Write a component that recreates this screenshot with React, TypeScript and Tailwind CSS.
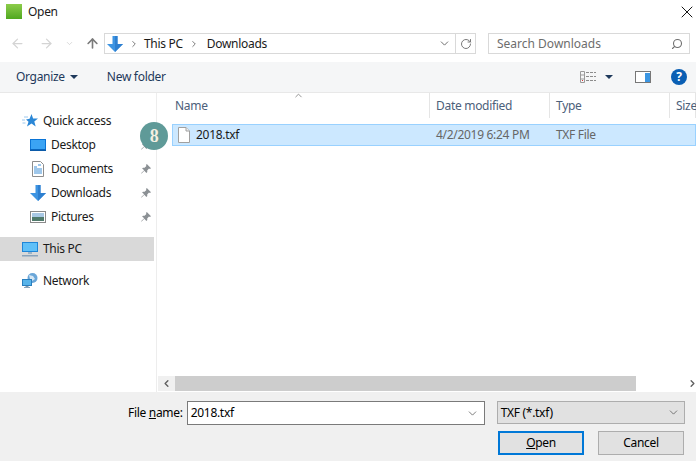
import React from "react";
import { ChevronDown, ChevronRight, ArrowLeft, ArrowRight, ArrowUp, RotateCw, Search, X } from "lucide-react";

const font = { fontFamily: '"Noto Sans", "Open Sans", sans-serif' };

function DownArrow({ size = 16 }: { size?: number }) {
  return (
    <svg width={size} height={size} viewBox="0 0 16 16" className="shrink-0">
      <path d="M5.5 0h5v8H16l-8 8-8-8h5.5z" fill="#3d94e2" />
      <path d="M8 0h2.5v8H16l-8 8z" fill="#2d7fd0" />
    </svg>
  );
}

function Star() {
  return (
    <svg width="16" height="14" viewBox="0 0 16 14">
      <path d="M9.5 0l1.6 4.4H16l-3.7 3 1.4 5-4.2-2.9L5 12.6l1.5-4.9L4 5.6l3.600-.8z" fill="#2b87d6" />
      <path d="M0 6h3M2 3h4M0.500 9h3" stroke="#9cc8ee" strokeWidth="1" />
    </svg>
  );
}

function Desktop() {
  return (
    <svg width="16" height="12" viewBox="0 0 16 12">
      <rect width="16" height="12" fill="#0a74d6" />
      <rect x="1" y="1" width="14" height="9" fill="#3ba4f4" />
      <rect x="0" y="10.500" width="16" height="1.500" fill="#0b5aa8" />
    </svg>
  );
}

function Doc() {
  return (
    <svg width="12" height="16" viewBox="0 0 12 16">
      <path d="M.5.500h8l3 3v12H.500z" fill="#fff" stroke="#8d8d8d" />
      <path d="M2 6h3M2 8h8M2 10h8M2 12h8M6 4h3" stroke="#3f8fd6" />
    </svg>
  );
}

function Picture() {
  return (
    <svg width="16" height="12" viewBox="0 0 16 12">
      <rect x=".5" y=".5" width="15" height="11" fill="#fff" stroke="#8a8a8a" />
      <rect x="2" y="2" width="12" height="4" fill="#a8c8e4" />
      <rect x="2" y="6" width="12" height="4" fill="#4f7a6b" />
    </svg>
  );
}

function Monitor() {
  return (
    <svg width="16" height="16" viewBox="0 0 16 16">
      <rect x="0" y="1" width="16" height="10" fill="#1f86d8" />
      <rect x="1" y="2" width="14" height="8" fill="#5fc0f8" />
      <rect x="6" y="11" width="4" height="2" fill="#9bb4c8" />
      <rect x="0" y="14" width="16" height="1.500" fill="#8aa4bc" />
    </svg>
  );
}

function Net() {
  return (
    <svg width="16" height="16" viewBox="0 0 16 16">
      <circle cx="10.500" cy="5" r="5" fill="#6aa6d8" />
      <path d="M7 2l4 1 2 3-3 2-2-2z" fill="#d5e6f3" />
      <rect x="0" y="6" width="10" height="7" fill="#2a7fbf" />
      <rect x="1" y="7" width="8" height="5" fill="#58b4ea" />
      <rect x="3.500" y="13" width="3" height="1" fill="#7f98ac" />
      <rect x="2" y="14" width="6" height="1" fill="#8aa4bc" />
    </svg>
  );
}

function PinIcon() {
  return (
    <svg width="10" height="10" viewBox="0 0 10 10" className="mr-[2px] shrink-0">
      <path d="M5.800 0L10 4.200 8.900 5 8 4.600 6.200 6.400 6.300 8 5.400 8.900 3.300 6.700.6 9.500 0 9.300 3.200 6.300 1.100 4.600 2 3.700 3.600 3.800 5.400 2 5 1z" fill="#8b9094" />
    </svg>
  );
}

function NavItem({ icon, label, pinned, indent }: { icon: React.ReactNode; label: string; pinned?: boolean; indent?: boolean }) {
  return (
    <div className={`flex h-6 items-center ${indent ? "pl-[30px]" : "pl-[22px]"} pr-[3px]`}>
      <span className="mr-[5px] flex h-4 w-4 items-center justify-center">{icon}</span>
      <span className="flex-1 whitespace-nowrap">{label}</span>
      {pinned && <PinIcon />}
    </div>
  );
}

function Column({ label, width, first }: { label: string; width: string; first?: boolean }) {
  return (
    <div className={`relative flex h-[25px] shrink-0 items-center border-r border-[#e5e5e5] pl-[6px] ${width}`}>
      {first && <ChevronDown size={11} className="absolute left-[124px] -top-[3px] rotate-180 text-[#8c8c8c]" />}
      <span>{label}</span>
    </div>
  );
}

export default function App() {
  return (
    <div className="flex h-[461px] w-[696px] flex-col overflow-hidden bg-white text-[12px] tracking-[-0.3px] text-[#1a1a1a]" style={font}>
      <div className="flex h-[24px] shrink-0 items-center pl-[6px] pr-[6px]">
        <span className="mr-[6px] -mt-[2px] h-[15px] w-[16px] bg-gradient-to-b from-[#8ccc4a] to-[#4fa81e]" />
        <span className="flex-1">Open</span>
        <X size={20} strokeWidth={1.1} className="-mr-[7px] text-black" />
      </div>

      <div className="flex h-[38px] shrink-0 items-center pr-[6px] pl-[10px] pt-[1px]">
        <ArrowLeft size={15} strokeWidth={2} className="mr-[14px] text-[#d4d4d4]" />
        <ArrowRight size={15} strokeWidth={2} className="mr-[11px] text-[#d4d4d4]" />
        <ChevronDown size={9} strokeWidth={2} className="mr-[11px] text-[#cfcfcf]" />
        <ArrowUp size={15} strokeWidth={2.6} className="mr-[4px] text-[#7a7a7a]" />
        <div className="flex h-[21px] w-[372px] items-center border border-[#d9d9d9]">
          <span className="ml-[2px] mr-[6px]"><DownArrow /></span>
          <ChevronRight size={10} strokeWidth={2.2} className="mr-[5px] text-[#707070]" />
          <span>This PC</span>
          <ChevronRight size={10} strokeWidth={2.2} className="ml-[6px] mr-[8px] text-[#707070]" />
          <span className="flex-1">Downloads</span>
          <ChevronDown size={13} strokeWidth={1.8} className="mr-[4px] text-[#6d6d6d]" />
          <div className="flex h-full w-[20px] items-center justify-center border-l border-[#d9d9d9]">
            <RotateCw size={12} className="text-[#7a7a7a]" />
          </div>
        </div>
        <div className="ml-[12px] flex h-[21px] flex-1 items-center justify-between border border-[#d9d9d9] pl-[8px] pr-[6px] tracking-normal text-[#6d6d6d]">
          <span>Search Downloads</span>
          <Search size={12} strokeWidth={2.2} className="-scale-x-100 text-[#6f6f6f]" />
        </div>
      </div>

      <div className="flex h-[30px] shrink-0 items-center bg-[#f5f6f7] pl-[16px] pr-[9px] text-[#1e395b]">
        <span>Organize</span>
        <span className="ml-[5px] h-0 w-0 border-x-[4px] border-t-[4px] border-x-transparent border-t-[#1e395b]" />
        <span className="ml-[29px] flex-1">New folder</span>
        <svg width="16" height="12" viewBox="0 0 16 12" className="mr-[9px]">
          <path d="M.5.500h4v11h-4zM.5 4h4M.5 8h4" fill="none" stroke="#9a9a9a" />
          <path d="M6 1.500h10M6 5.500h10M6 9.500h10" stroke="#8c8c8c" strokeDasharray="3 1" />
          <rect x="2" y="9" width="1" height="1" fill="#d33" />
        </svg>
        <span className="h-0 w-0 border-x-[4px] border-t-[4px] border-x-transparent border-t-[#1e395b]" />
        <svg width="16" height="12" viewBox="0 0 16 12" className="ml-[22px]">
          <rect x=".5" y=".5" width="15" height="11" fill="#fff" stroke="#777" />
          <rect x="10" y="2" width="5" height="9" fill="#3b96e2" />
        </svg>
        <span className="ml-[20px] flex h-4 w-4 items-center justify-center rounded-full bg-[#0a5fb4] text-[12px] font-bold text-white">?</span>
      </div>

      <div className="flex min-h-0 flex-1 border-t border-[#e8e8e8]">
        <div className="relative w-[157px] shrink-0 border-r border-[#ededed] pt-[16px] text-[#1a1a1a]">
          <NavItem icon={<Star />} label="Quick access" />
          <NavItem indent icon={<Desktop />} label="Desktop" pinned />
          <NavItem indent icon={<Doc />} label="Documents" pinned />
          <NavItem indent icon={<DownArrow />} label="Downloads" pinned />
          <NavItem indent icon={<Picture />} label="Pictures" pinned />
          <div className="mt-[8px] w-[154px] bg-[#d9d9d9]">
            <NavItem icon={<Monitor />} label="This PC" />
          </div>
          <div className="mt-[8px]">
            <NavItem icon={<Net />} label="Network" />
          </div>
          <span className="absolute left-[140px] top-[29px] flex h-[28px] w-[28px] items-center justify-center rounded-full bg-[#5f9a98] text-[18px] font-bold text-[#f2efe2]" style={{ fontFamily: '"Liberation Serif", serif' }}>8</span>
        </div>

        <div className="flex min-w-0 flex-1 flex-col pl-[12px]">
          <div className="flex shrink-0 text-[#4c607a]">
            <Column first label="Name" width="w-[261px]" />
            <Column label="Date modified" width="w-[120px]" />
            <Column label="Type" width="w-[120px]" />
            <Column label="Size" width="w-[26px]" />
          </div>
          <div className="ml-[3px] mt-[6px] flex h-[22px] shrink-0 items-center whitespace-nowrap border border-[#99d1ff] bg-[#cce8ff] pl-[5px]">
            <svg width="12" height="16" viewBox="0 0 12 16" className="mr-[6px] shrink-0">
              <path d="M.5.500h7.500l3.500 3.500v11.500H.500z" fill="#fff" stroke="#a0a0a0" />
              <path d="M8 .5V4h3.500" fill="#f0f0f0" stroke="#a0a0a0" />
            </svg>
            <span className="w-[240px]">2018.txf</span>
            <span className="w-[120px] text-[#666]">4/2/2019 6:24 PM</span>
            <span className="text-[#666]">TXF File</span>
          </div>
          <div className="flex-1" />
          <div className="-ml-[11px] mb-[1px] flex h-[15px] shrink-0 items-center justify-between bg-white">
            <div className="flex h-full flex-1 items-center">
              <span className="flex h-full w-[17px] items-center justify-center bg-[#f0f0f0]">
                <ChevronRight size={11} strokeWidth={3} className="rotate-180 text-[#606060]" />
              </span>
              <span className="h-full w-[461px] bg-[#cdcdcd]" />
            </div>
            <ChevronRight size={11} strokeWidth={3} className="-mr-[2px] text-[#606060]" />
          </div>
        </div>
      </div>

      <div className="flex h-[69px] shrink-0 flex-col bg-[#f0f0f0] pl-[128px] pr-[11px] pt-[9px] text-black">
        <div className="flex items-start">
          <span className="mr-[4px] self-center whitespace-nowrap">File <u>n</u>ame:</span>
          <div className="flex h-[24px] w-[298px] items-center justify-between border border-[#7a7a7a] bg-white pl-[3px] pr-[5px]">
            <span>2018.txf</span>
            <ChevronDown size={13} strokeWidth={1.4} className="text-[#555]" />
          </div>
          <div className="ml-[12px] flex h-[23px] flex-1 items-center justify-between border border-[#adadad] bg-[#e1e1e1] pl-[3px] pr-[4px]">
            <span>TXF (*.txf)</span>
            <ChevronDown size={13} strokeWidth={1.4} className="text-[#555]" />
          </div>
        </div>
        <div className="mt-[6px] flex justify-end gap-[14px] pr-[1px]">
          <div className="flex h-[24px] w-[86px] items-center justify-center border-2 border-[#0078d7] bg-[#e1e1e1]"><span><u>O</u>pen</span></div>
          <div className="flex h-[24px] w-[86px] items-center justify-center border border-[#adadad] bg-[#e1e1e1]">Cancel</div>
        </div>
      </div>
    </div>
  );
}
